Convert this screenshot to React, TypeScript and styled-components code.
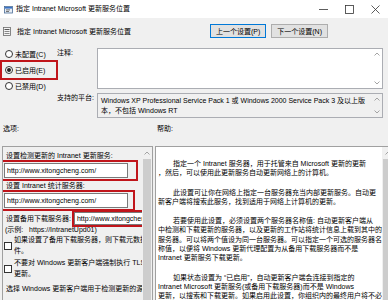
import React from 'react';
import styled, { createGlobalStyle } from 'styled-components';

const Global = createGlobalStyle`
  html, body { margin: 0; padding: 0; background: #f0f0f0; }
  body {
    font-family: "Liberation Sans", "Noto Sans CJK SC", sans-serif;
    font-size: 7px;
    color: #000;
  }
  * { box-sizing: border-box; }
`;

const Frame = styled.div`
  width: 388px;
  height: 300px;
  overflow: hidden;
  background: #f0f0f0;
  display: flex;
  flex-direction: column;
`;

const TitleBar = styled.div`
  height: 18px;
  flex: none;
  background: #fff;
  display: flex;
  align-items: center;
  padding-left: 4px;
`;

const TitleText = styled.span`
  flex: 1;
  margin-left: 3px;
  line-height: 18px;
  white-space: nowrap;
`;

const WinControls = styled.div`
  display: flex;
  height: 18px;
`;

const WinBtn = styled.div`
  width: 26px;
  display: flex;
  align-items: center;
  justify-content: center;
`;

const HeaderRow = styled.div`
  height: 26px;
  flex: none;
  display: flex;
  align-items: center;
  padding: 0 60px 0 3px;
`;

const HeaderText = styled.span`
  flex: 1;
  margin-left: 6px;
  white-space: nowrap;
`;

const NavButton = styled.div<{ $focused?: boolean }>`
  height: 14px;
  min-width: 55px;
  margin-left: 5px;
  padding: 0 5px;
  display: flex;
  align-items: center;
  justify-content: center;
  white-space: nowrap;
  background: #e1e1e1;
  border: 1px solid ${(p) => (p.$focused ? '#0078d7' : '#adadad')};
`;

const TopSection = styled.div`
  flex: none;
  display: flex;
  margin-top: 2px;
`;

const RadioCol = styled.div`
  width: 55px;
  flex: none;
  display: flex;
  flex-direction: column;
`;

const RadioItem = styled.div<{ $marked?: boolean }>`
  height: 16px;
  width: 54px;
  margin-left: 2px;
  padding-left: 3px;
  display: flex;
  align-items: center;
  gap: 2px;
  white-space: nowrap;
  outline: ${(p) => (p.$marked ? '2px solid #c0151b' : 'none')};
`;

const RadioCircle = styled.span<{ $checked?: boolean }>`
  width: 8px;
  height: 8px;
  border-radius: 50%;
  border: 1px solid #333;
  background: #fff;
  display: flex;
  align-items: center;
  justify-content: center;
  &::after {
    content: '';
    display: ${(p) => (p.$checked ? 'block' : 'none')};
    width: 4px;
    height: 4px;
    border-radius: 50%;
    background: #222;
  }
`;

const RightCol = styled.div`
  flex: 1;
  display: flex;
  flex-direction: column;
  gap: 4px;
  margin-top: 2px;
  margin-right: 5px;
`;

const FieldRow = styled.div`
  display: flex;
`;

const FieldLabel = styled.div`
  width: 42px;
  flex: none;
  padding-left: 2px;
  line-height: 10px;
  white-space: nowrap;
`;

const TextBox = styled.div<{ $h: number; $readonly?: boolean }>`
  flex: 1;
  height: ${(p) => p.$h}px;
  display: flex;
  border: 1px solid #abadb3;
  background: ${(p) => (p.$readonly ? '#f0f0f0' : '#fff')};
`;

const BoxText = styled.div`
  flex: 1;
  padding: 2px 3px;
  line-height: 9.5px;
  white-space: nowrap;
  overflow: hidden;
`;

const ScrollStrip = styled.div`
  width: 10px;
  flex: none;
  display: flex;
  flex-direction: column;
  justify-content: space-between;
  align-items: center;
  padding: 3px 0;
`;

const LabelsRow = styled.div`
  flex: none;
  height: 16px;
  margin-top: 2px;
  display: flex;
  align-items: center;
`;

const SectionLabel = styled.div<{ $w?: number }>`
  width: ${(p) => (p.$w ? `${p.$w}px` : 'auto')};
  padding-left: 3px;
`;

const Panels = styled.div`
  flex: 1;
  min-height: 0;
  margin-top: 10px;
  display: flex;
  gap: 2px;
  padding: 0 2px;
`;

const OptionsPanel = styled.div`
  width: 151px;
  flex: none;
  height: 170px;
  display: flex;
  border: 1px solid #a0a0a0;
  background: #f0f0f0;
`;

const OptionsBody = styled.div`
  flex: 1;
  min-width: 0;
  overflow: hidden;
  padding: 3px 0 0 1px;
  display: flex;
  flex-direction: column;
`;

const OptLabel = styled.div<{ $mt?: number }>`
  line-height: 11px;
  padding-left: 2px;
  margin-top: ${(p) => p.$mt ?? 0}px;
  white-space: nowrap;
`;

const Marked = styled.div<{ $w: number; $mt?: number }>`
  width: ${(p) => p.$w}px;
  flex: none;
  margin-top: ${(p) => p.$mt ?? 0}px;
  outline: 2px solid #c0151b;
  outline-offset: 1px;
`;

const Field = styled.div<{ $w: number; $h?: number }>`
  width: ${(p) => p.$w}px;
  height: ${(p) => p.$h ?? 15}px;
  border: 1px solid #7a7a7a;
  background: #fff;
  padding-left: 2px;
  display: flex;
  align-items: center;
  white-space: nowrap;
  overflow: hidden;
`;

const InlineRow = styled.div<{ $mt?: number }>`
  display: flex;
  align-items: center;
  height: 14px;
  margin-top: ${(p) => p.$mt ?? 0}px;
  white-space: nowrap;
`;

const InlineMarked = styled.div`
  margin-left: 3px;
  flex: none;
  outline: 2px solid #c0151b;
  outline-offset: 0px;
`;

const Example = styled.div`
  line-height: 10px;
  padding-left: 1px;
  white-space: pre;
`;

const CheckItem = styled.div<{ $mt?: number }>`
  display: flex;
  align-items: center;
  margin-top: ${(p) => p.$mt ?? 0}px;
`;

const CheckBox = styled.span`
  width: 8px;
  height: 8px;
  flex: none;
  border: 1px solid #333;
  background: #fff;
  margin-right: 2px;
`;

const CheckText = styled.div`
  line-height: 10.5px;
  white-space: nowrap;
`;

const VScroll = styled.div<{ $w: number }>`
  width: ${(p) => p.$w}px;
  flex: none;
  display: flex;
  flex-direction: column;
  background: #f0f0f0;
`;

const ArrowCell = styled.div`
  height: 12px;
  flex: none;
  display: flex;
  align-items: center;
  justify-content: center;
`;

const Thumb = styled.div`
  flex: 1;
  margin: 0 1px;
  background: #cdcdcd;
`;

const HelpPanel = styled.div`
  flex: 1;
  height: 170px;
  display: flex;
  border: 1px solid #a0a0a0;
  background: #fff;
`;

const HelpBody = styled.div`
  flex: 1;
  min-width: 0;
  overflow: hidden;
  padding: 12px 0 0 2px;
`;

const Para = styled.div`
  margin-bottom: 10px;
`;

const Line = styled.div<{ $indent?: boolean }>`
  line-height: 9.3px;
  white-space: nowrap;
  padding-left: ${(p) => (p.$indent ? '15px' : '0')};
`;

const Chevron = ({ down }: { down?: boolean }) => (
  <svg width="6" height="4" viewBox="0 0 6 4">
    <path d={down ? 'M0.5 0.5 L3 3 L5.5 0.5' : 'M0.5 3.5 L3 1 L5.5 3.5'} fill="none" stroke="#9a9a9a" strokeWidth="0.9" />
  </svg>
);

const TitleIcon = () => (
  <svg width="9" height="9" viewBox="0 0 9 9">
    <rect x="0.5" y="1.5" width="8" height="6.5" fill="#e8eef6" stroke="#4a6b96" strokeWidth="0.8" />
    <rect x="1" y="2" width="7" height="1.6" fill="#3a73c4" />
    <rect x="2" y="4.5" width="4" height="0.8" fill="#555" />
    <rect x="2" y="6" width="3" height="0.8" fill="#555" />
  </svg>
);

const HeaderIcon = () => (
  <svg width="8" height="9" viewBox="0 0 8 9">
    <rect x="0.5" y="0.5" width="7" height="8" fill="#f4f4f4" stroke="#6a6a6a" strokeWidth="0.8" />
    <rect x="1.5" y="2" width="5" height="1" fill="#555" />
    <rect x="1.5" y="4" width="5" height="1" fill="#888" />
    <rect x="1.5" y="6" width="5" height="1" fill="#888" />
  </svg>
);

export default function App() {
  return (
    <>
      <Global />
      <Frame>
        <TitleBar>
          <TitleIcon />
          <TitleText>指定 Intranet Microsoft 更新服务位置</TitleText>
          <WinControls>
            <WinBtn>
              <svg width="9" height="9" viewBox="0 0 9 9">
                <path d="M0 4.5 H9" stroke="#333" strokeWidth="0.8" />
              </svg>
            </WinBtn>
            <WinBtn>
              <svg width="9" height="9" viewBox="0 0 9 9">
                <rect x="0.5" y="0.5" width="8" height="8" fill="none" stroke="#333" strokeWidth="0.8" />
              </svg>
            </WinBtn>
            <WinBtn>
              <svg width="9" height="9" viewBox="0 0 9 9">
                <path d="M0.5 0.5 L8.5 8.5 M8.5 0.5 L0.5 8.5" stroke="#333" strokeWidth="0.8" />
              </svg>
            </WinBtn>
          </WinControls>
        </TitleBar>

        <HeaderRow>
          <HeaderIcon />
          <HeaderText>指定 Intranet Microsoft 更新服务位置</HeaderText>
          <NavButton $focused>上一个设置(P)</NavButton>
          <NavButton>下一个设置(N)</NavButton>
        </HeaderRow>

        <TopSection>
          <RadioCol>
            <RadioItem>
              <RadioCircle />
              未配置(C)
            </RadioItem>
            <RadioItem $marked>
              <RadioCircle $checked />
              已启用(E)
            </RadioItem>
            <RadioItem>
              <RadioCircle />
              已禁用(D)
            </RadioItem>
          </RadioCol>
          <RightCol>
            <FieldRow>
              <FieldLabel>注释:</FieldLabel>
              <TextBox $h={41}>
                <BoxText />
                <ScrollStrip>
                  <Chevron />
                  <Chevron down />
                </ScrollStrip>
              </TextBox>
            </FieldRow>
            <FieldRow>
              <FieldLabel>支持的平台:</FieldLabel>
              <TextBox $h={25} $readonly>
                <BoxText>
                  <div>Windows XP Professional Service Pack 1 或 Windows 2000 Service Pack 3 及以上版</div>
                  <div>本，不包括 Windows RT</div>
                </BoxText>
                <ScrollStrip>
                  <Chevron />
                  <Chevron down />
                </ScrollStrip>
              </TextBox>
            </FieldRow>
          </RightCol>
        </TopSection>

        <LabelsRow>
          <SectionLabel $w={154}>选项:</SectionLabel>
          <SectionLabel>帮助:</SectionLabel>
        </LabelsRow>

        <Panels>
          <OptionsPanel>
            <OptionsBody>
              <OptLabel>设置检测更新的 Intranet 更新服务:</OptLabel>
              <Marked $w={131} $mt={2}>
                <Field $w={124}>http://www.xitongcheng.com/</Field>
              </Marked>
              <OptLabel $mt={2}>设置 Intranet 统计服务器:</OptLabel>
              <Marked $w={128} $mt={2}>
                <Field $w={124}>http://www.xitongcheng.com/</Field>
              </Marked>
              <InlineRow $mt={3}>
                <OptLabel>设置备用下载服务器:</OptLabel>
                <InlineMarked>
                  <Field $w={124} $h={13}>http://www.xitongcheng.com/</Field>
                </InlineMarked>
              </InlineRow>
              <Example>{'(示例:   https://IntranetUpd01)'}</Example>
              <CheckItem>
                <CheckBox />
                <CheckText>
                  <div>如果设置了备用下载服务器，则下载元数据文</div>
                  <div>件。</div>
                </CheckText>
              </CheckItem>
              <CheckItem $mt={2}>
                <CheckBox />
                <CheckText>
                  <div>不要对 Windows 更新客户端强制执行 TLS 证书</div>
                  <div>更新。</div>
                </CheckText>
              </CheckItem>
              <OptLabel $mt={4}>选择 Windows 更新客户端用于检测更新的源服务</OptLabel>
            </OptionsBody>
            <VScroll $w={10}>
              <ArrowCell>
                <Chevron />
              </ArrowCell>
              <Thumb />
            </VScroll>
          </OptionsPanel>

          <HelpPanel>
            <HelpBody>
              <Para>
                <Line $indent>指定一个 Intranet 服务器，用于托管来自 Microsoft 更新的更新</Line>
                <Line>，然后，可以使用此更新服务自动更新网络上的计算机。</Line>
              </Para>
              <Para>
                <Line $indent>此设置可让你在网络上指定一台服务器充当内部更新服务。自动更</Line>
                <Line>新客户端将搜索此服务，找到适用于网络上计算机的更新。</Line>
              </Para>
              <Para>
                <Line $indent>若要使用此设置，必须设置两个服务器名称值: 自动更新客户端从</Line>
                <Line>中检测和下载更新的服务器，以及更新的工作站将统计信息上载到其中的</Line>
                <Line>服务器。可以将两个值设为同一台服务器。可以指定一个可选的服务器名</Line>
                <Line>称值，以便将 Windows 更新代理配置为从备用下载服务器而不是</Line>
                <Line>Intranet 更新服务下载更新。</Line>
              </Para>
              <Para>
                <Line $indent>如果状态设置为 “已启用”，自动更新客户端会连接到指定的</Line>
                <Line>Intranet Microsoft 更新服务(或备用下载服务器)而不是 Windows</Line>
                <Line>更新，以搜索和下载更新。如果启用此设置，你组织内的最终用户将不必</Line>
              </Para>
            </HelpBody>
            <VScroll $w={12}>
              <ArrowCell>
                <Chevron />
              </ArrowCell>
              <Thumb />
            </VScroll>
          </HelpPanel>
        </Panels>
      </Frame>
    </>
  );
}
